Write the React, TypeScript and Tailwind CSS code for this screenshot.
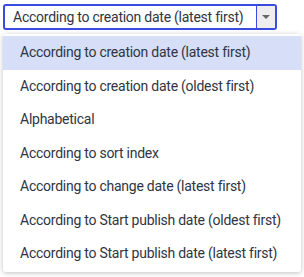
const options = [
  'According to creation date (latest first)',
  'According to creation date (oldest first)',
  'Alphabetical',
  'According to sort index',
  'According to change date (latest first)',
  'According to Start publish date (oldest first)',
  'According to Start publish date (latest first)',
];

export default function App() {
  return (
    <div
      className="relative h-[277px] w-[304px] bg-white text-[#2f3542]"
      style={{ fontFamily: 'Roboto, "Liberation Sans", sans-serif' }}
    >
      <div className="pl-[3px] pt-[4px]">
        <div className="flex h-[26px] w-[274px] overflow-hidden rounded-[3px] border-2 border-[#3b4be0]">
          <div className="flex flex-1 items-center pl-[8px] text-[14px] tracking-[-0.25px]">
            {options[0]}
          </div>
          <div className="flex w-[19px] items-center justify-center border-l border-[#3b4be0] bg-[#eeeeee]">
            <svg width="8" height="4" viewBox="0 0 8 4">
              <path d="M0 0h8L4 4z" fill="#666" />
            </svg>
          </div>
        </div>
      </div>
      <div className="absolute left-[3px] top-[34px] w-[298px] rounded-[3px] bg-white pb-[1px] pt-[2px] shadow-[0_1px_5px_rgba(0,0,0,0.25)]">
        {options.map((option, i) => (
          <div
            key={option}
            className={`flex h-[33.5px] items-center pl-[17px] text-[14px] tracking-[-0.25px] ${
              i === 0 ? 'bg-[#d6def8]' : ''
            }`}
          >
            {option}
          </div>
        ))}
      </div>
    </div>
  );
}
